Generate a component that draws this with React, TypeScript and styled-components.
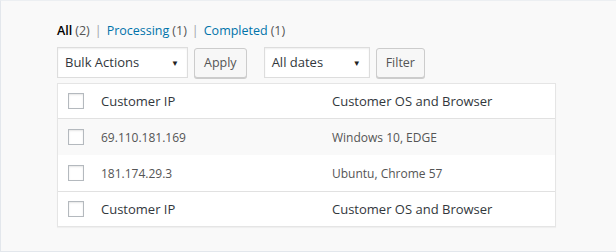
import styled, { createGlobalStyle } from "styled-components";

const GlobalStyle = createGlobalStyle`
  html, body {
    margin: 0;
    padding: 0;
    background: #f9f9f9;
  }
  body {
    font-family: "Open Sans", "Noto Sans", sans-serif;
    font-size: 13px;
    color: #444;
  }
`;

const Page = styled.div`
  box-sizing: border-box;
  width: 616px;
  height: 252px;
  padding: 21px 0 0 57px;
  background: #f9f9f9;
  border-left: 1px solid #e3e7ec;
  border-top: 1px solid #eceff2;
  border-bottom: 1px solid #e3e7ec;
`;

const Panel = styled.div`
  width: 499px;
  margin-left: -1px;
`;

const StatusList = styled.ul`
  display: flex;
  align-items: center;
  margin: 0;
  padding: 0;
  list-style: none;
  font-size: 12.5px;
  line-height: 18px;
  color: #555;
`;

const StatusItem = styled.li`
  display: flex;
  align-items: center;
`;

const StatusLink = styled.a<{ $current?: boolean }>`
  color: ${(p) => (p.$current ? "#000" : "#0073aa")};
  font-weight: ${(p) => (p.$current ? 600 : 400)};
  text-decoration: none;
`;

const Count = styled.span`
  color: #555;
  margin-left: 3px;
`;

const Sep = styled.span`
  color: #a0a5aa;
  margin: 0 5px;
`;

const Toolbar = styled.div`
  display: flex;
  align-items: center;
  margin-top: 6px;
  height: 32px;
`;

const Group = styled.div<{ $gap?: number }>`
  display: flex;
  align-items: center;
  gap: 6px;
  margin-right: ${(p) => p.$gap ?? 0}px;
`;

const Select = styled.div<{ $width: number }>`
  box-sizing: border-box;
  display: flex;
  align-items: center;
  justify-content: space-between;
  width: ${(p) => p.$width}px;
  height: 31px;
  padding: 0 8px 0 7px;
  background: #fff;
  border: 1px solid #ddd;
  box-shadow: inset 0 1px 2px rgba(0, 0, 0, 0.07);
  color: #32373c;
  font-size: 13px;
`;

const Caret = styled.span`
  font-size: 8px;
  color: #222;
`;

const Button = styled.button`
  box-sizing: border-box;
  height: 30px;
  padding: 0 9px;
  margin-top: 1px;
  background: #f7f7f7;
  border: 1px solid #ccc;
  border-radius: 3px;
  box-shadow: 0 1px 0 #ccc;
  color: #555;
  font-family: inherit;
  font-size: 12.5px;
`;

const Table = styled.div`
  margin-top: 5px;
  background: #fff;
  border: 1px solid #e5e5e5;
  box-shadow: 0 1px 1px rgba(0, 0, 0, 0.04);
`;

const Row = styled.div<{ $alt?: boolean; $head?: "top" | "bottom" }>`
  box-sizing: border-box;
  display: grid;
  grid-template-columns: 43px 231px 1fr;
  align-items: center;
  height: ${(p) => (p.$head ? 35 : 36)}px;
  background: ${(p) => (p.$alt ? "#f9f9f9" : "#fff")};
  border-bottom: ${(p) => (p.$head === "top" ? "1px solid #e1e1e1" : "none")};
  border-top: ${(p) => (p.$head === "bottom" ? "1px solid #e1e1e1" : "none")};
  color: ${(p) => (p.$head ? "#32373c" : "#555")};
  font-size: ${(p) => (p.$head ? "13px" : "12px")};
`;

const CheckCell = styled.div`
  padding-left: 10px;
  display: flex;
  align-items: center;
`;

const Checkbox = styled.span`
  box-sizing: border-box;
  width: 16px;
  height: 16px;
  border: 1px solid #b4b9be;
  background: #fff;
  box-shadow: inset 0 1px 2px rgba(0, 0, 0, 0.1);
`;

const Cell = styled.div`
  white-space: nowrap;
`;

const rows = [
  { ip: "69.110.181.169", os: "Windows 10, EDGE" },
  { ip: "181.174.29.3", os: "Ubuntu, Chrome 57" },
];

export default function App() {
  return (
    <Page>
      <GlobalStyle />
      <Panel>
        <StatusList>
          <StatusItem>
            <StatusLink $current>All</StatusLink>
            <Count>(2)</Count>
            <Sep>|</Sep>
          </StatusItem>
          <StatusItem>
            <StatusLink>Processing</StatusLink>
            <Count>(1)</Count>
            <Sep>|</Sep>
          </StatusItem>
          <StatusItem>
            <StatusLink>Completed</StatusLink>
            <Count>(1)</Count>
          </StatusItem>
        </StatusList>
        <Toolbar>
          <Group $gap={17}>
            <Select $width={131}>
              Bulk Actions <Caret>▼</Caret>
            </Select>
            <Button>Apply</Button>
          </Group>
          <Group>
            <Select $width={106}>
              All dates <Caret>▼</Caret>
            </Select>
            <Button>Filter</Button>
          </Group>
        </Toolbar>
        <Table>
          <Row $head="top">
            <CheckCell>
              <Checkbox />
            </CheckCell>
            <Cell>Customer IP</Cell>
            <Cell>Customer OS and Browser</Cell>
          </Row>
          {rows.map((r, i) => (
            <Row key={r.ip} $alt={i % 2 === 0}>
              <CheckCell>
                <Checkbox />
              </CheckCell>
              <Cell>{r.ip}</Cell>
              <Cell>{r.os}</Cell>
            </Row>
          ))}
          <Row $head="bottom">
            <CheckCell>
              <Checkbox />
            </CheckCell>
            <Cell>Customer IP</Cell>
            <Cell>Customer OS and Browser</Cell>
          </Row>
        </Table>
      </Panel>
    </Page>
  );
}
